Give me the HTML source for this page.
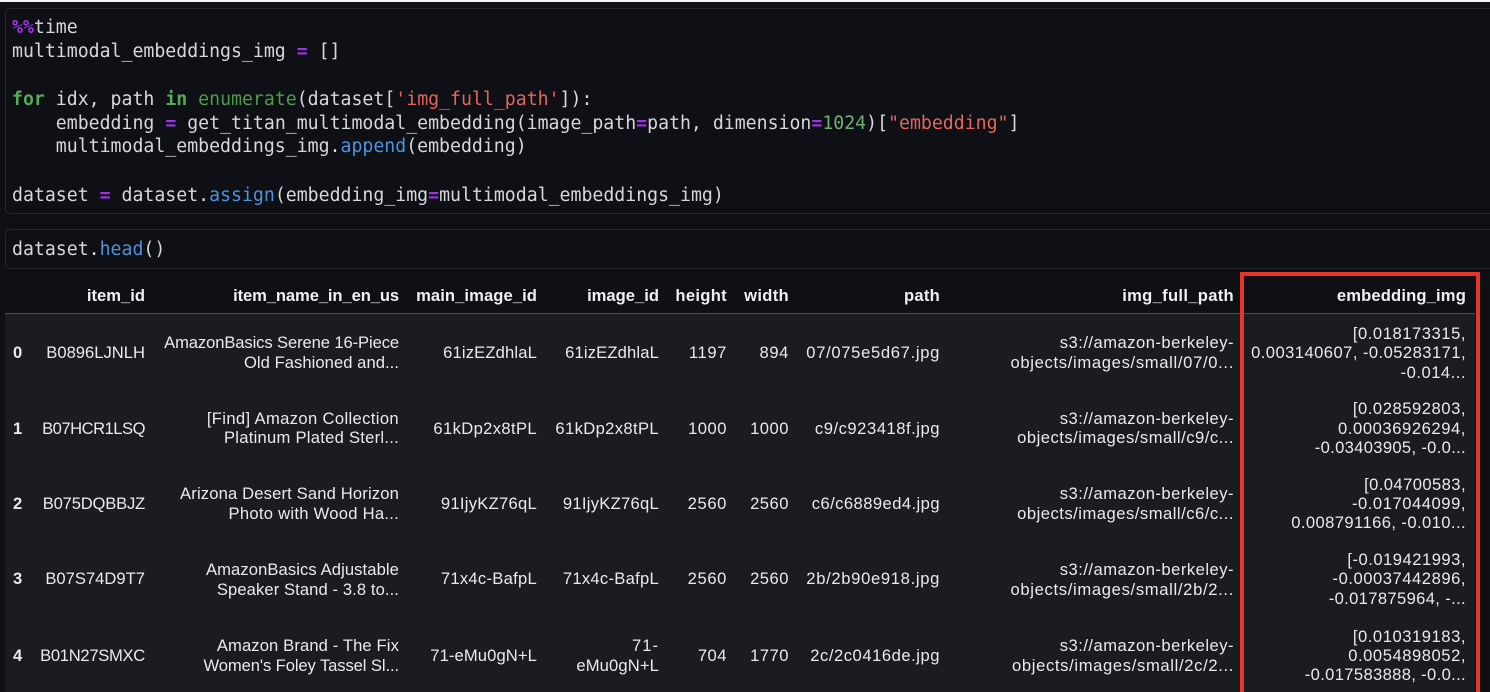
<!DOCTYPE html>
<html>
<head>
<meta charset="utf-8">
<style>
html,body{margin:0;padding:0;background:#0e1015;width:1490px;height:692px;overflow:hidden;}
#page{position:relative;width:1490px;height:692px;overflow:hidden;font-family:"Liberation Sans",Arial,sans-serif;}
.wrap{position:absolute;left:0;top:1px;width:1490px;height:691px;}
.strip{position:absolute;left:0;top:0;width:1490px;height:2px;background:#f4f4f4;}
.cell{position:absolute;left:5px;width:1500px;box-sizing:border-box;border:1px solid #25272b;border-radius:5px;background:#0e1015;}
.c{position:absolute;left:12px;height:24px;line-height:24px;font-family:"DejaVu Sans Mono","Liberation Mono",monospace;font-size:18.2px;color:#d6d8da;white-space:pre;}
.k{color:#a032e8;font-weight:bold}
.g{color:#5aa85a;font-weight:bold}
.b{color:#4c93dd}
.e{color:#4f9a4f}
.s{color:#e2665e}
.n{color:#72ae72}
.rows{position:absolute;left:5px;top:314px;width:1470px;height:378px;background:#1a1c21;}
.hl{position:absolute;left:5px;top:312.5px;width:1470px;height:1.5px;background:#4a4c50;}
.t{position:absolute;height:20px;line-height:20px;font-size:16.6px;color:#e9eaeb;white-space:nowrap;text-align:right;width:400px;}
.h{font-weight:bold;color:#eef0f1;}
.i{font-weight:bold;text-align:left;width:20px;left:13px;}
.red{position:absolute;left:1240px;top:272px;width:240px;height:424px;box-sizing:border-box;border:4px solid #e8352a;}
</style>
</head>
<body>
<div id="page">
<div class="strip"></div>
<div class="cell" style="top:8px;height:206px"></div>
<div class="cell" style="top:229px;height:40px"></div>
<div class="rows"></div>
<div class="hl"></div>

<div class="wrap">
<div class="c" style="top:15px"><span class="k">%%</span>time</div>
<div class="c" style="top:39px">multimodal_embeddings_img <span class="k">=</span> []</div>
<div class="c" style="top:87px"><span class="g">for</span> idx, path <span class="g">in</span> <span class="e">enumerate</span>(dataset[<span class="s">'img_full_path'</span>]):</div>
<div class="c" style="top:111px">    embedding <span class="k">=</span> get_titan_multimodal_embedding(image_path<span class="k">=</span>path, dimension<span class="k">=</span><span class="n">1024</span>)[<span class="s">"embedding"</span>]</div>
<div class="c" style="top:134px">    multimodal_embeddings_img.<span class="b">append</span>(embedding)</div>
<div class="c" style="top:183px">dataset <span class="k">=</span> dataset.<span class="b">assign</span>(embedding_img<span class="k">=</span>multimodal_embeddings_img)</div>
<div class="c" style="top:237px">dataset.<span class="b">head</span>()</div>

<!-- header -->
<div class="t h" style="left:-255px;top:285px">item_id</div>
<div class="t h" style="left:-1px;top:285px;letter-spacing:-.11px">item_name_in_en_us</div>
<div class="t h" style="left:137px;top:285px;letter-spacing:.08px">main_image_id</div>
<div class="t h" style="left:259px;top:285px">image_id</div>
<div class="t h" style="left:327px;top:285px;letter-spacing:.3px">height</div>
<div class="t h" style="left:389px;top:285px;letter-spacing:.3px">width</div>
<div class="t h" style="left:540px;top:285px;letter-spacing:.25px">path</div>
<div class="t h" style="left:834px;top:285px;letter-spacing:.3px">img_full_path</div>
<div class="t h" style="left:1066px;top:285px;letter-spacing:.15px">embedding_img</div>

<!-- row 0 -->
<div class="t i" style="top:342px">0</div>
<div class="t" style="left:-255px;top:342px">B0896LJNLH</div>
<div class="t" style="left:-1px;top:332px;letter-spacing:-.11px">AmazonBasics Serene 16-Piece</div>
<div class="t" style="left:-1px;top:352px;letter-spacing:.05px">Old Fashioned and...</div>
<div class="t" style="left:137px;top:342px;letter-spacing:.15px">61izEZdhlaL</div>
<div class="t" style="left:259px;top:342px;letter-spacing:.15px">61izEZdhlaL</div>
<div class="t" style="left:327px;top:342px;letter-spacing:.6px">1197</div>
<div class="t" style="left:389px;top:342px;letter-spacing:.6px">894</div>
<div class="t" style="left:540px;top:342px;letter-spacing:.67px">07/075e5d67.jpg</div>
<div class="t" style="left:834px;top:332px;letter-spacing:.48px">s3://amazon-berkeley-</div>
<div class="t" style="left:834px;top:352px;letter-spacing:.67px">objects/images/small/07/0...</div>
<div class="t" style="left:1066px;top:323px;letter-spacing:.54px">[0.018173315,</div>
<div class="t" style="left:1066px;top:342px;letter-spacing:.44px">0.003140607, -0.05283171,</div>
<div class="t" style="left:1066px;top:362px;letter-spacing:.5px">-0.014...</div>

<!-- row 1 -->
<div class="t i" style="top:418px">1</div>
<div class="t" style="left:-255px;top:418px;letter-spacing:-.5px">B07HCR1LSQ</div>
<div class="t" style="left:-1px;top:408px;letter-spacing:.36px">[Find] Amazon Collection</div>
<div class="t" style="left:-1px;top:427px;letter-spacing:.26px">Platinum Plated Sterl...</div>
<div class="t" style="left:137px;top:418px;letter-spacing:.36px">61kDp2x8tPL</div>
<div class="t" style="left:259px;top:418px;letter-spacing:.36px">61kDp2x8tPL</div>
<div class="t" style="left:327px;top:418px;letter-spacing:.5px">1000</div>
<div class="t" style="left:389px;top:418px;letter-spacing:.5px">1000</div>
<div class="t" style="left:540px;top:418px;letter-spacing:.53px">c9/c923418f.jpg</div>
<div class="t" style="left:834px;top:408px;letter-spacing:.48px">s3://amazon-berkeley-</div>
<div class="t" style="left:834px;top:427px;letter-spacing:.5px">objects/images/small/c9/c...</div>
<div class="t" style="left:1066px;top:398px;letter-spacing:.54px">[0.028592803,</div>
<div class="t" style="left:1066px;top:418px;letter-spacing:.57px">0.00036926294,</div>
<div class="t" style="left:1066px;top:437px;letter-spacing:.32px">-0.03403905, -0.0...</div>

<!-- row 2 -->
<div class="t i" style="top:493px">2</div>
<div class="t" style="left:-255px;top:493px;letter-spacing:-.2px">B075DQBBJZ</div>
<div class="t" style="left:-1px;top:483px;letter-spacing:.15px">Arizona Desert Sand Horizon</div>
<div class="t" style="left:-1px;top:503px;letter-spacing:.27px">Photo with Wood Ha...</div>
<div class="t" style="left:137px;top:493px;letter-spacing:.27px">91IjyKZ76qL</div>
<div class="t" style="left:259px;top:493px;letter-spacing:.27px">91IjyKZ76qL</div>
<div class="t" style="left:327px;top:493px;letter-spacing:.6px">2560</div>
<div class="t" style="left:389px;top:493px;letter-spacing:.5px">2560</div>
<div class="t" style="left:540px;top:493px;letter-spacing:.43px">c6/c6889ed4.jpg</div>
<div class="t" style="left:834px;top:483px;letter-spacing:.48px">s3://amazon-berkeley-</div>
<div class="t" style="left:834px;top:503px;letter-spacing:.5px">objects/images/small/c6/c...</div>
<div class="t" style="left:1066px;top:474px;letter-spacing:.42px">[0.04700583,</div>
<div class="t" style="left:1066px;top:493px;letter-spacing:.54px">-0.017044099,</div>
<div class="t" style="left:1066px;top:512px;letter-spacing:.41px">0.008791166, -0.010...</div>

<!-- row 3 -->
<div class="t i" style="top:568px">3</div>
<div class="t" style="left:-255px;top:568px">B07S74D9T7</div>
<div class="t" style="left:-1px;top:559px;letter-spacing:.09px">AmazonBasics Adjustable</div>
<div class="t" style="left:-1px;top:579px;letter-spacing:.09px">Speaker Stand - 3.8 to...</div>
<div class="t" style="left:137px;top:568px;letter-spacing:.27px">71x4c-BafpL</div>
<div class="t" style="left:259px;top:568px;letter-spacing:.27px">71x4c-BafpL</div>
<div class="t" style="left:327px;top:568px;letter-spacing:.6px">2560</div>
<div class="t" style="left:389px;top:568px;letter-spacing:.5px">2560</div>
<div class="t" style="left:540px;top:568px;letter-spacing:.67px">2b/2b90e918.jpg</div>
<div class="t" style="left:834px;top:559px;letter-spacing:.48px">s3://amazon-berkeley-</div>
<div class="t" style="left:834px;top:579px;letter-spacing:.67px">objects/images/small/2b/2...</div>
<div class="t" style="left:1066px;top:549px;letter-spacing:.5px">[-0.019421993,</div>
<div class="t" style="left:1066px;top:568px;letter-spacing:.53px">-0.00037442896,</div>
<div class="t" style="left:1066px;top:588px;letter-spacing:.35px">-0.017875964, -...</div>

<!-- row 4 -->
<div class="t i" style="top:645px">4</div>
<div class="t" style="left:-255px;top:645px;letter-spacing:-.3px">B01N27SMXC</div>
<div class="t" style="left:-1px;top:635px;letter-spacing:.12px">Amazon Brand - The Fix</div>
<div class="t" style="left:-1px;top:655px;letter-spacing:-.1px">Women's Foley Tassel Sl...</div>
<div class="t" style="left:137px;top:645px;letter-spacing:.1px">71-eMu0gN+L</div>
<div class="t" style="left:259px;top:635px;letter-spacing:1px">71-</div>
<div class="t" style="left:259px;top:655px;letter-spacing:.12px">eMu0gN+L</div>
<div class="t" style="left:327px;top:645px;letter-spacing:.5px">704</div>
<div class="t" style="left:389px;top:645px;letter-spacing:.5px">1770</div>
<div class="t" style="left:540px;top:645px;letter-spacing:.53px">2c/2c0416de.jpg</div>
<div class="t" style="left:834px;top:635px;letter-spacing:.48px">s3://amazon-berkeley-</div>
<div class="t" style="left:834px;top:655px;letter-spacing:.65px">objects/images/small/2c/2...</div>
<div class="t" style="left:1066px;top:626px;letter-spacing:.54px">[0.010319183,</div>
<div class="t" style="left:1066px;top:645px;letter-spacing:.54px">0.0054898052,</div>
<div class="t" style="left:1066px;top:664px;letter-spacing:.34px">-0.017583888, -0.0...</div>
</div>

<div class="red"></div>
</div>
</body>
</html>
